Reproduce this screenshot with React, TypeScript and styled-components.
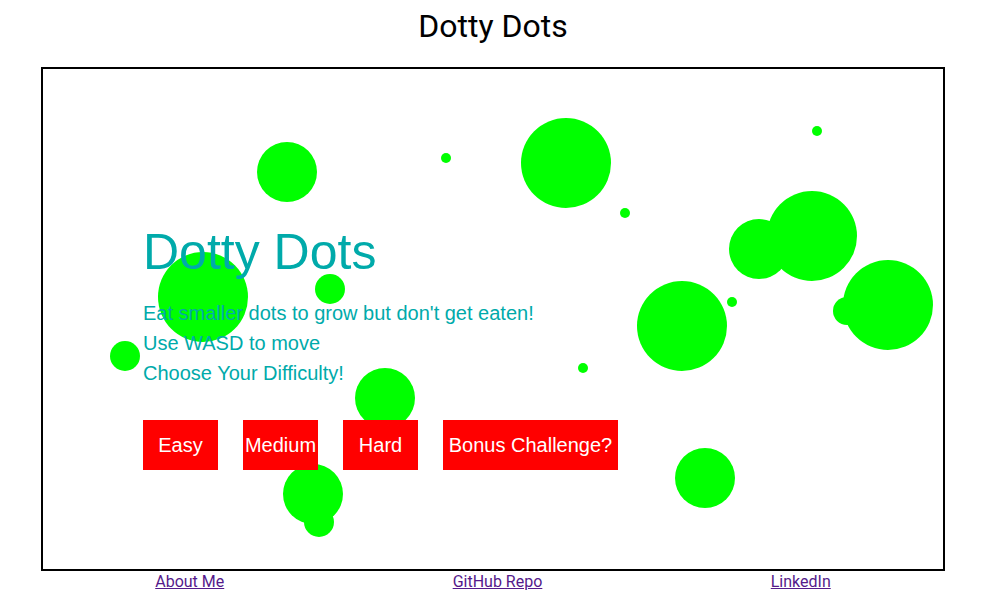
import React from "react";
import styled, { createGlobalStyle } from "styled-components";

interface Dot {
  x: number;
  y: number;
  r: number;
}

// centres are in the game area's own coordinates (900 x 500)
const dots: Dot[] = [
  { x: 244, y: 103, r: 30 },
  { x: 403, y: 89, r: 5 },
  { x: 523, y: 94, r: 45 },
  { x: 160, y: 228, r: 45 },
  { x: 287, y: 220, r: 15 },
  { x: 82, y: 287, r: 15 },
  { x: 342, y: 329, r: 30 },
  { x: 540, y: 299, r: 5 },
  { x: 270, y: 425, r: 30 },
  { x: 276, y: 453, r: 15 },
  { x: 662, y: 409, r: 30 },
  { x: 639, y: 257, r: 45 },
  { x: 582, y: 144, r: 5 },
  { x: 689, y: 233, r: 5 },
  { x: 716, y: 180, r: 30 },
  { x: 769, y: 167, r: 45 },
  { x: 774, y: 62, r: 5 },
  { x: 804, y: 242, r: 14 },
  { x: 845, y: 236, r: 45 },
];

const difficulties = [
  { label: "Easy", width: 75 },
  { label: "Medium", width: 75 },
  { label: "Hard", width: 75 },
  { label: "Bonus Challenge?", width: 175 },
];

const GlobalStyle = createGlobalStyle`
  body {
    margin: 8px;
    background: #fff;
    font-family: Roboto, "Liberation Sans", sans-serif;
  }
`;

const Page = styled.div`
  display: flex;
  flex-direction: column;
  align-items: center;
  padding-left: 2px;
`;

const Title = styled.h1`
  margin: 0 0 22px 0;
  font-size: 32px;
  font-weight: 400;
  line-height: 37px;
  color: #000;
`;

const GameBox = styled.div`
  position: relative;
  width: 900px;
  height: 500px;
  border: 2px solid #000;
  overflow: hidden;
`;

const DotShape = styled.div`
  position: absolute;
  border-radius: 50%;
  background: #00ff00;
`;

const Menu = styled.div`
  position: absolute;
  inset: 0;
  padding: 158px 0 0 100px;
  display: flex;
  flex-direction: column;
  align-items: flex-start;
  font-family: "Liberation Sans", Arial, sans-serif;
  color: #00aaaa;
`;

const Heading = styled.div`
  font-size: 50px;
  line-height: 50px;
  margin-bottom: 21px;
`;

const Line = styled.div`
  font-size: 20px;
  line-height: 30px;
`;

const ButtonRow = styled.div`
  display: flex;
  gap: 25px;
  margin-top: 32px;
`;

const DifficultyButton = styled.button<{ $width: number }>`
  display: flex;
  align-items: center;
  justify-content: center;
  width: ${(p) => p.$width}px;
  height: 50px;
  padding: 0;
  border: none;
  background: #ff0000;
  color: #fff;
  font-family: "Liberation Sans", Arial, sans-serif;
  font-size: 20px;
  white-space: nowrap;
  cursor: pointer;
`;

const Footer = styled.nav`
  width: 904px;
  margin-top: 1px;
  display: flex;
  justify-content: space-around;
`;

const FooterLink = styled.a`
  font-size: 16px;
  color: #551a8b;
  text-decoration: underline;
`;

const App: React.FC = () => {
  return (
    <Page>
      <GlobalStyle />
      <Title>Dotty Dots</Title>
      <GameBox>
        {dots.map((d, i) => (
          <DotShape
            key={i}
            style={{ left: d.x - d.r, top: d.y - d.r, width: d.r * 2, height: d.r * 2 }}
          />
        ))}
        <Menu>
          <Heading>Dotty Dots</Heading>
          <Line>Eat smaller dots to grow but don't get eaten!</Line>
          <Line>Use WASD to move</Line>
          <Line>Choose Your Difficulty!</Line>
          <ButtonRow>
            {difficulties.map((d) => (
              <DifficultyButton key={d.label} $width={d.width}>
                {d.label}
              </DifficultyButton>
            ))}
          </ButtonRow>
        </Menu>
      </GameBox>
      <Footer>
        <FooterLink href="#about">About Me</FooterLink>
        <FooterLink href="#github">GitHub Repo</FooterLink>
        <FooterLink href="#linkedin">LinkedIn</FooterLink>
      </Footer>
    </Page>
  );
};

export default App;
